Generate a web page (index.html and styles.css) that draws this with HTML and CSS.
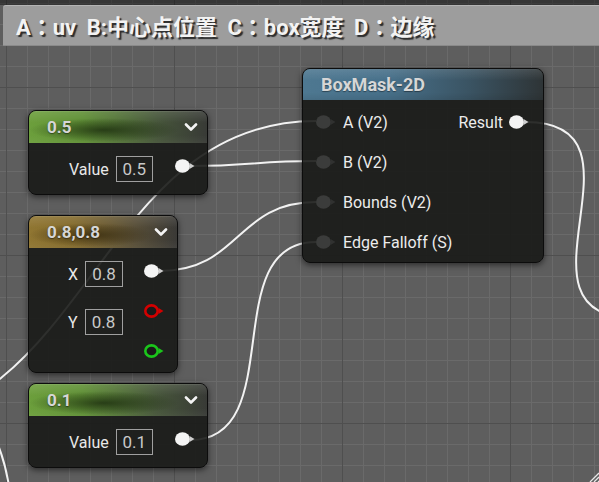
FILE: index.html
```html
<!DOCTYPE html>
<html>
<head>
<meta charset="utf-8">
<link rel="stylesheet" href="styles.css">
</head>
<body>
<div class="canvas">
  <div class="topband"></div>
  <div class="comment"><span>A<span class="colon">：</span>uv B:中心点位置 C<span class="colon">：</span>box宽度 D<span class="colon">：</span>边缘</span></div>

  <svg class="wires" width="599" height="482" viewBox="0 0 599 482">
    <path d="M -130 425 C 90 425, 96 121, 316 121"/>
    <path d="M 190 166 C 250 166, 256 161, 316 161"/>
    <path d="M 160 271 C 240 271, 236 202, 316 202"/>
    <path d="M 190 440 C 290 440, 216 242, 316 242"/>
    <path d="M 526 122 C 660 122, 500 318, 634 318"/>
    <path d="M -6 436 C 0 448, 5 462, 9 486"/>
  </svg>

  <div class="node n-half">
    <div class="header h-green"><span>0.5</span><svg class="chev" width="14" height="9" viewBox="0 0 14 9"><path d="M2 1.5 L7 6.5 L12 1.5"/></svg></div>
    <div class="body body-single">
      <div class="vrow"><span class="lbl">Value</span><span class="box">0.5</span></div>
      <svg class="pin" width="20" height="14" viewBox="0 0 20 14"><ellipse cx="7.5" cy="7" rx="7.5" ry="6.8" fill="#f4f4f4"/><path d="M14.5 4 L19.5 7 L14.5 10 Z" fill="#cfcfcf"/></svg>
    </div>
  </div>

  <div class="node n-vec">
    <div class="header h-gold"><span>0.8,0.8</span><svg class="chev" width="14" height="9" viewBox="0 0 14 9"><path d="M2 1.5 L7 6.5 L12 1.5"/></svg></div>
    <div class="body body-vec">
      <div class="vcol">
        <div class="vrow"><span class="lbl">X</span><span class="box">0.8</span></div>
        <div class="vrow"><span class="lbl">Y</span><span class="box">0.8</span></div>
      </div>
      <div class="pcol">
        <svg class="pin" width="20" height="14" viewBox="0 0 20 14"><ellipse cx="7.5" cy="7" rx="7.5" ry="6.8" fill="#f4f4f4"/><path d="M14.5 4 L19.5 7 L14.5 10 Z" fill="#cfcfcf"/></svg>
        <svg class="pin" width="20" height="14" viewBox="0 0 20 14"><ellipse cx="7.5" cy="7" rx="6.2" ry="5.6" fill="#1a1a1a" stroke="#d30000" stroke-width="2.6"/><path d="M14.5 4 L19.5 7 L14.5 10 Z" fill="#d30000"/></svg>
        <svg class="pin" width="20" height="14" viewBox="0 0 20 14"><ellipse cx="7.5" cy="7" rx="6.2" ry="5.6" fill="#1a1a1a" stroke="#1bc51b" stroke-width="2.6"/><path d="M14.5 4 L19.5 7 L14.5 10 Z" fill="#1bc51b"/></svg>
      </div>
    </div>
  </div>

  <div class="node n-tenth">
    <div class="header h-green"><span>0.1</span><svg class="chev" width="14" height="9" viewBox="0 0 14 9"><path d="M2 1.5 L7 6.5 L12 1.5"/></svg></div>
    <div class="body body-single">
      <div class="vrow"><span class="lbl">Value</span><span class="box">0.1</span></div>
      <svg class="pin" width="20" height="14" viewBox="0 0 20 14"><ellipse cx="7.5" cy="7" rx="7.5" ry="6.8" fill="#f4f4f4"/><path d="M14.5 4 L19.5 7 L14.5 10 Z" fill="#cfcfcf"/></svg>
    </div>
  </div>

  <div class="node n-box">
    <div class="header h-blue"><span>BoxMask-2D</span></div>
    <div class="body body-box">
      <div class="brow">
        <div class="in"><svg class="pin" width="20" height="14" viewBox="0 0 20 14"><ellipse cx="7.5" cy="7" rx="7.5" ry="6.8" fill="#3b3c3b"/><path d="M14.5 4 L19.5 7 L14.5 10 Z" fill="#303130"/></svg><span>A (V2)</span></div>
        <div class="out"><span>Result</span><svg class="pin" width="20" height="14" viewBox="0 0 20 14"><ellipse cx="7.5" cy="7" rx="7.5" ry="6.8" fill="#f4f4f4"/><path d="M14.5 4 L19.5 7 L14.5 10 Z" fill="#cfcfcf"/></svg></div>
      </div>
      <div class="brow">
        <div class="in"><svg class="pin" width="20" height="14" viewBox="0 0 20 14"><ellipse cx="7.5" cy="7" rx="7.5" ry="6.8" fill="#3b3c3b"/><path d="M14.5 4 L19.5 7 L14.5 10 Z" fill="#303130"/></svg><span>B (V2)</span></div>
      </div>
      <div class="brow">
        <div class="in"><svg class="pin" width="20" height="14" viewBox="0 0 20 14"><ellipse cx="7.5" cy="7" rx="7.5" ry="6.8" fill="#3b3c3b"/><path d="M14.5 4 L19.5 7 L14.5 10 Z" fill="#303130"/></svg><span>Bounds (V2)</span></div>
      </div>
      <div class="brow">
        <div class="in"><svg class="pin" width="20" height="14" viewBox="0 0 20 14"><ellipse cx="7.5" cy="7" rx="7.5" ry="6.8" fill="#3b3c3b"/><path d="M14.5 4 L19.5 7 L14.5 10 Z" fill="#303130"/></svg><span>Edge Falloff (S)</span></div>
      </div>
    </div>
  </div>

  <svg class="grip" width="12" height="12" viewBox="0 0 12 12">
    <path d="M12 3 L3 12 M12 7 L7 12 M12 11 L11 12"/>
  </svg>
</div>
</body>
</html>
```

FILE: styles.css
```css
* { box-sizing: border-box; }

body {
  margin: 0;
  background: #5e5e5e;
  font-family: Roboto, "Noto Sans CJK SC", sans-serif;
}

.canvas {
  position: relative;
  width: 599px;
  height: 482px;
  overflow: hidden;
  background-color: #5e5e5e;
  background-image:
    linear-gradient(to right, #4f4f4f 1px, transparent 1px),
    linear-gradient(to bottom, #4f4f4f 1px, transparent 1px),
    linear-gradient(to right, #6a6a6a 1px, transparent 1px),
    linear-gradient(to bottom, #6a6a6a 1px, transparent 1px);
  background-size: 168px 100%, 100% 168px, 21px 100%, 100% 21px;
  background-position: 6px 0, 0 87px, 6px 0, 0 3px;
}

.topband {
  position: absolute;
  left: 0;
  top: 0;
  width: 100%;
  height: 5px;
  background: rgba(0, 0, 0, 0.42);
}

.comment {
  position: absolute;
  left: 3px;
  top: 5px;
  right: -10px;
  height: 41px;
  background: #9d9d9d;
  border-top: 1px solid #b4b4b4;
  border-bottom: 1px solid #8a8a8a;
  border-radius: 3px 0 0 0;
  display: flex;
  align-items: center;
  padding: 0 0 2px 13px;
  font-family: Roboto, "Noto Sans CJK SC", sans-serif;
  font-size: 22px;
  font-weight: 700;
  word-spacing: 5px;
  color: #f3f3f3;
  text-shadow: 2px 2px 1px #2c2c2c;
  white-space: nowrap;
}

.colon {
  font-family: "Noto Sans CJK TC", "Noto Sans CJK SC", sans-serif;
}

.wires {
  position: absolute;
  left: 0;
  top: 0;
}
.wires path {
  fill: none;
  stroke: #f2f2f2;
  stroke-width: 2;
}

.node {
  position: absolute;
  border-radius: 8px;
  background: rgba(24, 25, 23, 0.9);
  border: 1px solid #0c0c0c;
  box-shadow: 0 2px 6px rgba(0, 0, 0, 0.55);
  overflow: hidden;
  color: #e6e6e6;
}

.n-half { left: 28px; top: 110px; width: 180px; height: 85px; }
.n-vec { left: 28px; top: 215px; width: 150px; height: 158px; }
.n-tenth { left: 28px; top: 383px; width: 180px; height: 85px; }
.n-box { left: 302px; top: 68px; width: 242px; height: 195px; }

.header {
  height: 32px;
  display: flex;
  align-items: center;
  justify-content: space-between;
  padding: 0 9px 1px 18px;
  font-size: 17px;
  font-weight: 700;
  color: #d6d6d6;
  text-shadow: 0 1px 1px rgba(0, 0, 0, 0.4);
  border-top: 1px solid rgba(255, 255, 255, 0.15);
}

.h-green {
  background:
    radial-gradient(ellipse 42% 38% at 42% 58%, rgba(24, 40, 12, 0.75), transparent),
    linear-gradient(to bottom, rgba(255, 255, 255, 0.10), transparent 35%, transparent 75%, rgba(255, 255, 255, 0.04)),
    linear-gradient(to right, #6c9f3c 0%, #5f8f35 30%, #46553a 72%, #383a36 100%);
}
.h-gold {
  background:
    radial-gradient(ellipse 42% 38% at 42% 58%, rgba(45, 34, 8, 0.7), transparent),
    linear-gradient(to bottom, rgba(255, 255, 255, 0.10), transparent 35%, transparent 75%, rgba(255, 255, 255, 0.04)),
    linear-gradient(to right, #907632 0%, #836a2c 30%, #574e38 72%, #3a3936 100%);
}
.h-blue {
  height: 31px;
  padding-left: 18px;
  font-size: 18px;
  background:
    linear-gradient(to bottom, rgba(255, 255, 255, 0.10), transparent 35%, transparent 75%, rgba(0, 0, 0, 0.08)),
    linear-gradient(to right, #4e7891 0%, #47708a 35%, #3a5362 70%, #2e3436 100%);
}

.chev path {
  fill: none;
  stroke: #f4f4f4;
  stroke-width: 2.6;
  stroke-linecap: round;
  stroke-linejoin: round;
}

.lbl {
  font-size: 16px;
  color: #e8e8e8;
}

.box {
  display: inline-flex;
  align-items: center;
  justify-content: center;
  height: 26px;
  border: 1px solid #a0a0a0;
  padding: 0 4px;
  font-size: 17px;
  color: #c9c9c9;
}

.vrow {
  display: flex;
  align-items: center;
  gap: 7px;
  height: 26px;
}

.pin { display: block; }

.body-single {
  display: flex;
  align-items: center;
  padding: 13px 0 0 40px;
}
.body-single .box { width: 37px; }
.body-single .pin { margin: 0 0 0 22px; transform: translateY(-3px); }

.body-vec {
  display: flex;
  padding: 13px 0 0 39px;
}
.vcol {
  display: flex;
  flex-direction: column;
  gap: 22px;
}
.body-vec .box { width: 38px; }
.pcol {
  display: flex;
  flex-direction: column;
  gap: 26px;
  padding: 3px 0 0 21px;
}

.body-box {
  padding: 2px 14px 0 13px;
  font-size: 16px;
  color: #ececec;
}
.brow {
  height: 40px;
  display: flex;
  align-items: center;
  justify-content: space-between;
}
.in, .out {
  display: flex;
  align-items: center;
}
.in { gap: 7px; }
.out { gap: 6px; }

.grip {
  position: absolute;
  right: 0;
  bottom: 0;
}
.grip path {
  stroke: #e8e8e8;
  stroke-width: 1.3;
  fill: none;
}
```
